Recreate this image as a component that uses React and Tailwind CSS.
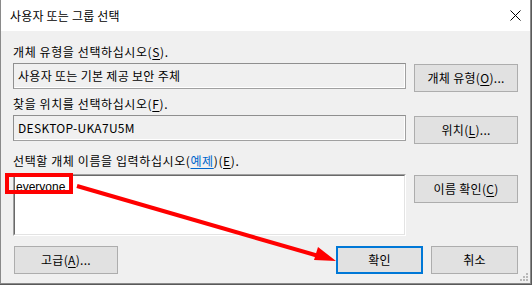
import React from "react";

const font = { fontFamily: '"Noto Sans CJK KR", "Noto Sans", sans-serif' };

const Mn = ({ children }) => <span className="underline underline-offset-2">{children}</span>;

const Btn = ({ children, primary, className = "" }) => (
    <div
        className={`flex items-center justify-center h-[28px] text-[12px] tracking-[0.3px] text-black ${
            primary ? "border-2 border-[#0078d7] bg-[#e1e1e1]" : "border border-[#adadad] bg-[#e1e1e1]"
        } ${className}`}
    >
        {children}
    </div>
);

const ReadOnlyBox = ({ children }) => (
    <div className="w-[394px] h-[26px] border border-t-[#8f8f8f] border-l-[#8f8f8f] border-r-[#a0a0a0] border-b-[#a0a0a0] bg-[#f0f0f0]">
        <div className="h-full border border-t-[#f0f0f0] border-l-[#f0f0f0] border-r-[#ffffff] border-b-[#ffffff] flex items-center pl-[3px] text-[12px] tracking-[0.3px] text-black">
            {children}
        </div>
    </div>
);

const Grip = () => (
    <svg width="8" height="8" viewBox="0 0 8 8" className="absolute right-[2px] bottom-[2px]">
        {[
            [6, 0], [6, 3], [3, 3], [6, 6], [3, 6], [0, 6],
        ].map(([x, y], i) => (
            <rect key={i} x={x} y={y} width="2" height="2" fill="#b8b8b8" />
        ))}
    </svg>
);

const App = () => {
    return (
        <div className="w-[532px] h-[285px] bg-[#5a5a5a] overflow-hidden" style={font}>
            <div className="relative w-[531px] h-[284px] bg-[#f0f0f0] border-l border-r border-b border-[#8a8a8a] flex flex-col">
                {/* title bar */}
                <div className="h-[31px] bg-white flex items-center justify-between pl-[9px] pr-[9px]">
                    <span className="text-[12px] tracking-[0.2px] text-black">사용자 또는 그룹 선택</span>
                    <svg width="11" height="11" viewBox="0 0 11 11">
                        <path d="M0.5 0.5 L10.5 10.5 M10.5 0.5 L0.5 10.5" stroke="#000" strokeWidth="1" />
                    </svg>
                </div>

                <div className="flex flex-col px-[12px]">
                    <div className="mt-[13px] h-[16px] leading-[16px] text-[12px] tracking-[0.6px] text-black">
                        개체 유형을 선택하십시오(<Mn>S</Mn>).
                    </div>
                    <div className="mt-[3px] h-[29px] flex items-start gap-[8px]">
                        <ReadOnlyBox>사용자 또는 기본 제공 보안 주체</ReadOnlyBox>
                        <Btn className="w-[104px] mt-[1px]">
                            개체 유형(<Mn>O</Mn>)...
                        </Btn>
                    </div>

                    <div className="mt-[4px] h-[16px] leading-[16px] text-[12px] tracking-[0.6px] text-black">
                        찾을 위치를 선택하십시오(<Mn>F</Mn>).
                    </div>
                    <div className="mt-[3px] h-[29px] flex items-start gap-[8px]">
                        <ReadOnlyBox>DESKTOP-UKA7U5M</ReadOnlyBox>
                        <Btn className="w-[104px] mt-[1px]">
                            위치(<Mn>L</Mn>)...
                        </Btn>
                    </div>

                    <div className="mt-[9px] h-[16px] leading-[16px] text-[12px] tracking-[0.6px] text-black">
                        선택할 개체 이름을 입력하십시오(
                        <span className="text-[#0066cc] underline underline-offset-2">예제</span>)(<Mn>E</Mn>).
                    </div>
                    <div className="mt-[5px] h-[62px] flex items-start gap-[8px]">
                        <div className="w-[394px] h-[62px] border border-t-[#a0a0a0] border-l-[#a0a0a0] border-r-[#ffffff] border-b-[#ffffff]">
                            <div
                                className="h-full bg-white border border-t-[#696969] border-l-[#696969] border-r-[#e3e3e3] border-b-[#e3e3e3] pl-[1px] pt-[3px] text-[12px] leading-[16px] text-black"
                                style={{ fontFamily: '"Liberation Sans", Arial, sans-serif' }}
                            >
                                everyone
                            </div>
                        </div>
                        <Btn className="w-[104px] mt-[1px]">
                            이름 확인(<Mn>C</Mn>)
                        </Btn>
                    </div>

                    <div className="mt-[10px] flex items-center">
                        <Btn className="w-[104px] ml-[1px]">
                            고급(<Mn>A</Mn>)...
                        </Btn>
                        <div className="flex-1" />
                        <Btn primary className="w-[87px]">
                            확인
                        </Btn>
                        <Btn className="w-[87px] ml-[8px]">
                            취소
                        </Btn>
                    </div>
                </div>

                <Grip />

                {/* red annotation overlay */}
                <svg className="absolute -left-[1px] top-0 pointer-events-none" width="531" height="284" viewBox="0 0 531 284">
                    <rect x="7" y="175" width="64" height="17" fill="none" stroke="#ff0000" strokeWidth="4" />
                    <line x1="77" y1="186" x2="322" y2="257" stroke="#ff0000" strokeWidth="4" />
                    <polygon points="336,261 314,260 318,247" fill="#ff0000" />
                </svg>
            </div>
        </div>
    );
};

export default App;
